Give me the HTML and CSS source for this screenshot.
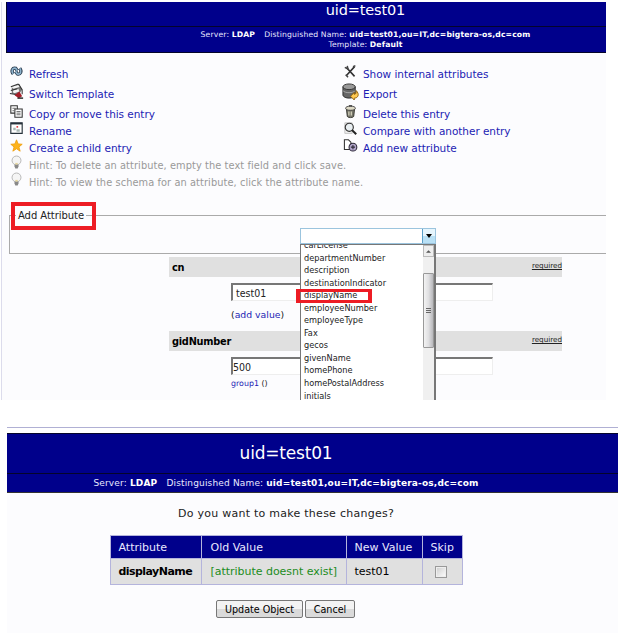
FILE: index.html
```html
<!DOCTYPE html>
<html lang="en">
<head>
<meta charset="utf-8">
<title>uid=test01</title>
<link rel="stylesheet" href="styles.css">
</head>
<body>
<section class="entry">
  <div class="entry-page">
    <header class="banner banner-top">
      <h1>uid=test01</h1>
      <div class="meta">
        <p class="dn"><span>Server: <b>LDAP</b></span><span>Distinguished Name: <b>uid=test01,ou=IT,dc=bigtera-os,dc=com</b></span></p>
        <p>Template: <b>Default</b></p>
      </div>
    </header>
    <div class="menu">
      <ul>
        <li><svg viewBox="0 0 16 16"><g fill="none" stroke="#26384a" stroke-width="4"><path d="M4 11C1 7 3 3 7 4l2 3M12 4c3 4 1 8-3 7L7 8"/></g><g fill="none" stroke="#8eb3cd" stroke-width="2"><path d="M4 11C1 7 3 3 7 4l2 3M12 4c3 4 1 8-3 7L7 8"/></g></svg><a>Refresh</a></li>
        <li class="tall"><svg class="big" viewBox="0 0 18 18"><path d="M4 4l8-3 3 6-4 6-7-2z" fill="#777"/><path d="M3 4l8-2 2 2-7 2zM5 8l6-2 1 3-6 2z" fill="#f4f4f4"/><path d="M3 4l8-3M3 8l7-2M2 11l5 1 6 3M11 1l4 6v5" fill="none" stroke="#333" stroke-width="1.1"/><path d="M7 13l5-4 3 5-4 2z" fill="#a51d28"/><path d="M10 16h6" stroke="#222" stroke-width="1.5"/></svg><a>Switch Template</a></li>
        <li><svg viewBox="0 0 16 16"><g fill="#fff" stroke="#333" stroke-width="1.3"><path d="M1 1h8v9H1z"/><path d="M6 5h9v10H6z"/></g><path d="M3 4h4M3 7h2M8 8h5M8 10h5M8 12h5" stroke="#555"/></svg><a>Copy or move this entry</a></li>
        <li><svg viewBox="0 0 16 16"><path d="M1 1h14v13H1z" fill="#fff" stroke="#26313b" stroke-width="1.4"/><path d="M1 2h14" stroke="#26313b" stroke-width="2"/><path d="M4 7h3v3H4zM8 9h4v3H8z" fill="#a9b8b5"/><path d="M8 5h2v2H8z" fill="#d33"/></svg><a>Rename</a></li>
        <li><svg viewBox="0 0 16 16"><path d="M8 1l2 5 5 .5-4 3.300 1.500 5.200L8 12l-4.500 3L5 9.800 1 6.500 6 6z" fill="#fdb31b" stroke="#ef9d09"/></svg><a>Create a child entry</a></li>
        <li class="hint"><svg viewBox="0 0 16 16"><circle cx="8" cy="5.500" r="5.500" fill="#f5f5f5" stroke="#aaa"/><path d="M5.500 10.500h5v2l-1 3h-3l-1-3z" fill="#888"/><path d="M6.500 9.500h3" stroke="#e5d59b" stroke-width="2"/></svg><span>Hint: To delete an attribute, empty the text field and click save.</span></li>
        <li class="hint"><svg viewBox="0 0 16 16"><circle cx="8" cy="5.500" r="5.500" fill="#f5f5f5" stroke="#aaa"/><path d="M5.500 10.500h5v2l-1 3h-3l-1-3z" fill="#888"/><path d="M6.500 9.500h3" stroke="#e5d59b" stroke-width="2"/></svg><span>Hint: To view the schema for an attribute, click the attribute name.</span></li>
      </ul>
      <ul>
        <li><svg viewBox="0 0 16 16"><path d="M3 3l10 11M13 2L3 13" stroke="#333" stroke-width="2"/><path d="M1 3l4 2-1-4M11 2l3-1M2 12l3 3" fill="none" stroke="#444" stroke-width="1.800"/></svg><a>Show internal attributes</a></li>
        <li class="tall"><svg class="big" viewBox="0 0 18 18"><path d="M1 4v9c1 4 12 4 13 0V4z" fill="#666" stroke="#292929"/><ellipse cx="7.500" cy="4" rx="6.500" ry="3" fill="#999" stroke="#333"/><path d="M1 8c2 3 11 3 13 0" fill="none" stroke="#aaa"/><path d="M9 14l4-4v2c2 0 2-2 2-4 4 4 2 8-2 8v2z" fill="#ffca53" stroke="#91600c"/></svg><a>Export</a></li>
        <li><svg viewBox="0 0 16 16"><path d="M3 5h10l-1 9c-1 2-7 2-8 0z" fill="#77776b" stroke="#26261f"/><ellipse cx="8" cy="4" rx="6" ry="2.500" fill="#ddd9c5" stroke="#333"/><path d="M6 8v5M9 8v5" stroke="#d5d3bd" stroke-width="1.500"/><path d="M6 1h4" stroke="#333" stroke-width="1.500"/></svg><a>Delete this entry</a></li>
        <li><svg viewBox="0 0 16 16"><path d="M1 1h9v13H1z" fill="#eee" stroke="#bbb"/><circle cx="6.500" cy="6.500" r="5" fill="#e9eff2" stroke="#333" stroke-width="1.400"/><path d="M10 10l5 5" stroke="#222" stroke-width="2.600"/></svg><a>Compare with another entry</a></li>
        <li><svg viewBox="0 0 16 16"><path d="M.5 1h5l3 3v9h-8z" fill="#fff" stroke="#333" stroke-width="1.300"/><circle cx="11" cy="10" r="4.800" fill="#b0a5c9" stroke="#2c2836" stroke-width="1.300"/><path d="M8.500 10h5M11 7.500v5" stroke="#2c2836" stroke-width="1.300"/></svg><a>Add new attribute</a></li>
      </ul>
    </div>
    <fieldset class="add"><legend>Add Attribute</legend></fieldset>
    <div class="attrs">
      <div class="bar"><b>cn</b><u>required</u></div>
      <div class="value"><div class="field first">test01</div><p class="more">(<a>add value</a>)</p></div>
      <div class="bar gid"><b>gidNumber</b><u>required</u></div>
      <div class="value"><div class="field">500</div><p class="group"><a>group1</a> ()</p></div>
      <div class="bar"></div>
    </div>
  </div>
  <div class="mark mark-legend"></div>
  <div class="dropdown">
    <div class="combo"><span></span><i><svg viewBox="0 0 6 4"><path d="M0 0h6L3 4z"/></svg></i></div>
    <div class="list">
      <ul class="options">
        <li>carLicense</li><li>departmentNumber</li><li>description</li><li>destinationIndicator</li><li>displayName</li><li>employeeNumber</li><li>employeeType</li><li>Fax</li><li>gecos</li><li>givenName</li><li>homePhone</li><li>homePostalAddress</li><li>initials</li>
      </ul>
      <div class="scroll"><div class="up"><svg viewBox="0 0 6 3"><path d="M0 3h6L3 0z"/></svg></div><div class="thumb"><i></i><i></i><i></i></div></div>
    </div>
  </div>
  <div class="mark mark-option"></div>
</section>
<section class="confirm">
  <header class="banner banner-confirm">
    <h1>uid=test01</h1>
    <div class="meta"><p class="dn"><span>Server: <b>LDAP</b></span><span>Distinguished Name: <b>uid=test01,ou=IT,dc=bigtera-os,dc=com</b></span></p></div>
  </header>
  <div class="body">
    <p class="question">Do you want to make these changes?</p>
    <table>
      <tr><th>Attribute</th><th>Old Value</th><th>New Value</th><th>Skip</th></tr>
      <tr><td><b>displayName</b></td><td class="none">[attribute doesnt exist]</td><td>test01</td><td class="skip"><i></i></td></tr>
    </table>
    <div class="buttons"><button class="update">Update Object</button><button>Cancel</button></div>
  </div>
</section>
</body>
</html>
```
FILE: styles.css
```css
* { box-sizing: border-box; }
body { margin: 0; width: 620px; height: 633px; overflow: hidden; background: #fff; font: 10.5px "DejaVu Sans", sans-serif; color: #222; }
h1, p, ul { margin: 0; padding: 0; font-weight: normal; list-style: none; }
svg { display: block; overflow: visible; }
a { color: #1c1cb4; }

.entry { position: relative; width: 605px; height: 398px; margin: 2px 0 0 1px; border-left: 1px solid #dcdcec; background: #fcfcfe; overflow: hidden; }
.entry-page { width: 719px; margin-left: 4px; }
.banner { background: #00008b; color: #fff; text-align: center; white-space: nowrap; }
.banner-top { height: 51px; border: 1px solid #05052a; border-top: 0; }
.banner-top h1 { height: 25px; line-height: 17px; font-size: 14.5px; letter-spacing: -.15px; border-bottom: 1px solid #05052a; }
.banner-top .meta { padding-top: 3px; font-size: 7.7px; line-height: 10px; letter-spacing: .13px; }
.meta { color: #e8e8ff; }
.meta b { color: #fff; }
.dn { display: flex; justify-content: center; gap: 9px; }

.menu { display: grid; grid-template-columns: 334px 300px; padding: 12px 0 0 4px; white-space: nowrap; letter-spacing: -.05px; }
.menu li { display: flex; align-items: center; height: 17px; }
.menu li.tall { height: 23px; }
.menu svg { width: 13px; height: 13px; margin: -4px 6px 0 0; flex: none; }
.menu svg.big { width: 17px; height: 17px; margin: -4px 4px 0 -2px; }
.menu .hint { color: #999; font-size: 9.8px; letter-spacing: .09px; }
.hint span { margin-top: 1px; }

.add { height: 45px; margin: 19px 0 0 3px; padding: 0 0 0 6px; border: 1px solid #aaa; min-width: 0; font-size: 10px; }
.add legend { padding: 0 2px; line-height: 13px; color: #222; letter-spacing: -.05px; }

.attrs { width: 393px; margin: 3px 0 0 163px; }
.bar { height: 20px; padding: 0 0 0 3px; display: flex; justify-content: space-between; align-items: center; background: #e0e0e0; }
.bar b { color: #000; font-size: 9.8px; letter-spacing: -.25px; }
.bar u { font-size: 7.2px; margin-top: -3px; }
.value { height: 54px; padding: 6px 0 0 62px; }
.field { width: 262px; height: 18px; border: 1px solid #eee; border-top: 2px solid #777; border-left: 2px solid #777; background: #fff; font: 10.5px/17px "DejaVu Sans Condensed", "DejaVu Sans", sans-serif; }
.field.first { padding-left: 3px; }
.more { font-size: 9.3px; line-height: 12px; margin-top: 8px; }
.bar.gid { height: 20px; }
.group { font-size: 7.9px; line-height: 12px; margin-top: 3px; }

.mark { position: absolute; border: 3px solid #ed1c24; }
.mark-legend { left: 9px; top: 200px; width: 85px; height: 28px; border-width: 4px; }
.mark-option { left: 294px; top: 287px; width: 76px; height: 14px; border-width: 3px 4px; }

.dropdown { position: absolute; left: 298px; top: 226px; width: 136px; }
.combo { display: flex; height: 16px; border: 1px solid #9bc4de; background: #fff; }
.combo span { flex: 1; }
.combo i { width: 13px; border-left: 1px solid #5b9fc9; background: linear-gradient(#e6f5fd 50%, #b9e0f5 50%); display: grid; place-items: center; }
.combo svg { width: 6px; height: 4px; }
.list { display: flex; height: 158px; border-left: 1px solid #777; border-right: 2px solid #777; background: #fff; overflow: hidden; border-top: 1px solid #777; }
.options { flex: 1; margin-top: -6px; padding-left: 3px; font: 9.1px "DejaVu Sans Condensed", "DejaVu Sans", sans-serif; white-space: nowrap; color: #222; }
.options li { height: 12.55px; line-height: 12.55px; }
.scroll { width: 11px; background: #f0f0f0; }
.up { height: 12px; border: 1px solid #bbb; display: grid; place-items: center; background: #eee; }
.up svg { width: 5px; height: 3px; fill: #555; }
.thumb { height: 75px; margin-top: 16px; border: 1px solid #999; border-radius: 1px; background: linear-gradient(90deg, #f3f3f3, #e0e0e2 50%, #b8b8bc); display: flex; flex-direction: column; align-items: center; justify-content: center; gap: 1px; }
.thumb i { width: 5px; height: 1px; background: #666; }

.confirm { width: 611px; height: 206px; margin: 27px 0 0 7px; border-top: 1px solid #b0b0d4; }
.banner-confirm { height: 60px; margin-top: 5px; padding: 0 53px 0 0; border-top: 1px solid #05052a; border-bottom: 1px solid #333; background: linear-gradient(#00008b 39px, #05052a 39px, #05052a 40px, #00008b 40px); }
.banner-confirm h1 { height: 40px; line-height: 39px; font-size: 17px; letter-spacing: -.2px; }
.banner-confirm .meta { font-size: 9px; line-height: 18px; letter-spacing: .16px; }
.body { height: 140px; padding: 14px 53px 0 0; background: #fcfcfe; display: flex; flex-direction: column; align-items: center; }
.question { line-height: 14px; font-size: 11px; letter-spacing: .26px; white-space: nowrap; }
table { width: 353px; margin-top: 14px; table-layout: fixed; border-collapse: collapse; font-size: 11px; white-space: nowrap; color: #000; }
th, td { border: 1px solid #b4b4dc; padding: 0 0 0 8px; text-align: left; font-weight: normal; }
th { height: 23px; background: #00008b; color: #e8e8ff; }
td { height: 26px; background: #e0e0e0; }
td b { letter-spacing: -.55px; }
th:nth-child(1) { width: 91px; }
th:nth-child(2) { width: 145px; }
th:nth-child(3) { width: 76px; }
th:nth-child(2), td.none { padding-left: 9px; }
td.none { color: #1c8c1c; letter-spacing: -.03px; }
.skip i { display: block; width: 12px; height: 12px; margin-left: 4px; border: 1px solid #999; background: linear-gradient(135deg, #ccc, #fff); box-shadow: inset 0 0 0 1px #eee; }
.buttons { display: flex; gap: 2px; margin: 15px 1px 0 0; }
button { width: 50px; height: 18px; padding: 0; border: 1px solid #777; border-radius: 2px; background: linear-gradient(#f3f3f3 50%, #dadada 50%); font: 10.7px "DejaVu Sans Condensed", "DejaVu Sans", sans-serif; color: #000; white-space: nowrap; }
button.update { width: 87px; }
```
